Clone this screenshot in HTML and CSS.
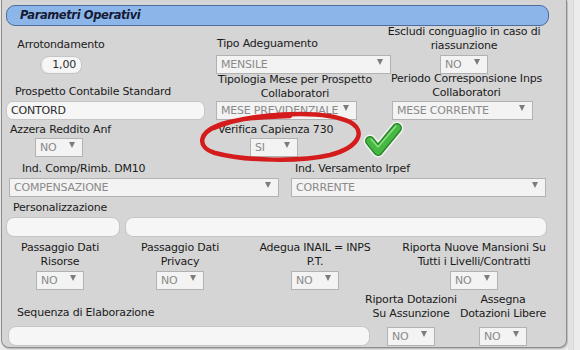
FILE: index.html
```html
<!DOCTYPE html>
<html lang="it">
<head>
<meta charset="utf-8">
<title>Parametri Operativi</title>
<link rel="stylesheet" href="styles.css">
</head>
<body>
<div class="page">
  <div class="panel">
    <div class="header">Parametri Operativi</div>

    <div class="row r1">
      <div class="cell c-center w102 ml8">
        <div class="lbl">Arrotondamento</div>
        <div class="inp num">1,00</div>
      </div>
      <div class="cell c-left w175 ml104">
        <div class="lbl pl1">Tipo Adeguamento</div>
        <div class="sel w175"><span>MENSILE</span><i class="arr"></i></div>
      </div>
      <div class="cell c-center w146">
        <div class="lbl lb2">Escludi conguaglio in caso di<br>riassunzione</div>
        <div class="sel w48"><span>NO</span><i class="arr"></i></div>
      </div>
    </div>

    <div class="row r2">
      <div class="cell c-left w199 ml4">
        <div class="lbl pl9">Prospetto Contabile Standard</div>
        <div class="inp txt w199">CONTORD</div>
      </div>
      <div class="cell c-center w158 ml11">
        <div class="lbl lb0">Tipologia Mese per Prospetto<br>Collaboratori</div>
        <div class="sel w141 self-start"><span>MESE PREVIDENZIALE</span><i class="arr"></i></div>
      </div>
      <div class="cell c-center w157 ml14">
        <div class="lbl lb1">Periodo Corresponsione Inps<br>Collaboratori</div>
        <div class="sel w141 self-start ml4"><span>MESE CORRENTE</span><i class="arr"></i></div>
      </div>
    </div>

    <div class="row r3">
      <div class="cell c-left w101 ml8">
        <div class="lbl lb1">Azzera Reddito Anf</div>
        <div class="sel w48 ml25"><span>NO</span><i class="arr"></i></div>
      </div>
      <div class="cell c-left w120 ml107">
        <div class="lbl lb1">Verifica Capienza 730</div>
        <div class="sel w48 ml32"><span>SI</span><i class="arr"></i></div>
      </div>
    </div>

    <div class="row r4">
      <div class="cell c-left w270 ml7">
        <div class="lbl pl13">Ind. Comp/Rimb. DM10</div>
        <div class="sel w270"><span>COMPENSAZIONE</span><i class="arr"></i></div>
      </div>
      <div class="cell c-left w255 ml12">
        <div class="lbl pl4">Ind. Versamento Irpef</div>
        <div class="sel w255"><span>CORRENTE</span><i class="arr"></i></div>
      </div>
    </div>

    <div class="row r5">
      <div class="cell c-left w114 ml4">
        <div class="lbl pl7">Personalizzazione</div>
        <div class="inp box w114"></div>
      </div>
      <div class="cell c-left w422 ml5">
        <div class="inp box w422"></div>
      </div>
    </div>

    <div class="row r6">
      <div class="cell c-center w100 ml8">
        <div class="lbl">Passaggio Dati<br>Risorse</div>
        <div class="sel w48"><span>NO</span><i class="arr"></i></div>
      </div>
      <div class="cell c-center w100 ml20">
        <div class="lbl">Passaggio Dati<br>Privacy</div>
        <div class="sel w48"><span>NO</span><i class="arr"></i></div>
      </div>
      <div class="cell c-center w120 ml25">
        <div class="lbl">Adegua INAIL = INPS<br>P.T.</div>
        <div class="sel w48"><span>NO</span><i class="arr"></i></div>
      </div>
      <div class="cell c-center w140 ml29">
        <div class="lbl">Riporta Nuove Mansioni Su<br>Tutti i Livelli/Contratti</div>
        <div class="sel w48"><span>NO</span><i class="arr"></i></div>
      </div>
    </div>

    <div class="row r7">
      <div class="cell c-left w362 ml6">
        <div class="lbl pl9 lb6">Sequenza di Elaborazione</div>
        <div class="inp box w362"></div>
      </div>
      <div class="cell c-center w82">
        <div class="lbl lb6">Riporta Dotazioni<br>Su Assunzione</div>
        <div class="sel w48"><span>NO</span><i class="arr"></i></div>
      </div>
      <div class="cell c-center w84 ml9">
        <div class="lbl lb6">Assegna<br>Dotazioni Libere</div>
        <div class="sel w48"><span>NO</span><i class="arr"></i></div>
      </div>
    </div>
  </div>
  <div class="strip"></div>

  <svg class="overlay" width="580" height="350" viewBox="0 0 580 350" aria-hidden="true">
    <path d="M214 128 C 245 114, 320 108, 350 122 C 366 131, 360 147, 330 155 C 300 162, 245 161, 215 153 C 196 147, 198 132, 222 124 C 240 118, 262 117, 290 116"
          fill="none" stroke="#d41c1c" stroke-width="4.5" stroke-linecap="round"/>
    <path d="M370 141 L378 151 L397 128" fill="none" stroke="#f2f2f2" stroke-width="13" stroke-linecap="round" stroke-linejoin="round"/>
    <path d="M370 141 L378 151 L397 128" fill="none" stroke="#2a862a" stroke-width="10" stroke-linecap="round" stroke-linejoin="round"/>
    <path d="M370 141 L378 151 L397 128" fill="none" stroke="#46b944" stroke-width="7" stroke-linecap="round" stroke-linejoin="round"/>
    <path d="M371 139 L378 147 L396 126" fill="none" stroke="#8fe07f" stroke-width="1.5" stroke-linecap="round" stroke-linejoin="round"/>
  </svg>
</div>
</body>
</html>
```
FILE: styles.css
```css
html, body {
  margin: 0;
  padding: 0;
}
body {
  background: #ececec;
  font-family: "DejaVu Sans", Verdana, sans-serif;
  font-size: 11px;
  letter-spacing: -0.2px;
  color: #1a1a1a;
}
.page {
  position: relative;
  width: 580px;
  height: 350px;
  display: flex;
  align-items: flex-start;
  overflow: hidden;
}
.panel {
  margin-left: 1px;
  width: 566px;
  height: 348px;
  box-sizing: border-box;
  background: #d5d5d5;
  border: 1px solid #8c8c8c;
  border-top: none;
  border-radius: 0 0 8px 8px;
  padding-top: 5px;
  overflow: hidden;
  box-shadow: 1px 1px 2px rgba(0,0,0,0.25);
}
.strip {
  margin-left: 1px;
  width: 5px;
  height: 350px;
  background: #e2e2e2;
  border-right: 1px solid #d9d9d9;
}
.header {
  margin-left: 4px;
  width: 543px;
  height: 21px;
  box-sizing: border-box;
  background: #8cb5ea;
  border: 1px solid #4e6c9c;
  border-radius: 9px;
  padding-left: 13px;
  font-weight: bold;
  font-style: italic;
  font-size: 11.5px;
  letter-spacing: -0.4px;
  line-height: 19px;
  color: #161a33;
}
.row {
  display: flex;
  align-items: flex-end;
}
.r1 { height: 48px; }
.r2 { height: 46px; }
.r3 { height: 37px; }
.r4 { height: 40px; }
.r5 { height: 40px; }
.r6 { height: 53px; }
.r7 { height: 56px; }

.cell {
  display: flex;
  flex-direction: column;
  flex: none;
}
.c-center { align-items: center; }
.c-left { align-items: flex-start; }
.self-start { align-self: flex-start; }

.lbl {
  line-height: 14px;
  white-space: nowrap;
  text-align: center;
  margin-bottom: 2px;
}
.c-left .lbl { text-align: left; }
.r1 .lbl { margin-bottom: 4px; }
.lb0 { margin-bottom: 0; }
.lb1 { margin-bottom: 1px; }
.lb2 { margin-bottom: 2px !important; }
.lb6 { margin-bottom: 6px; }

.pl1 { padding-left: 1px; }
.pl4 { padding-left: 4px; }
.pl7 { padding-left: 7px; }
.pl9 { padding-left: 9px; }
.pl13 { padding-left: 13px; }

.ml4 { margin-left: 4px; }
.ml5 { margin-left: 5px; }
.ml6 { margin-left: 6px; }
.ml7 { margin-left: 7px; }
.ml8 { margin-left: 8px; }
.ml9 { margin-left: 9px; }
.ml11 { margin-left: 11px; }
.ml12 { margin-left: 12px; }
.ml14 { margin-left: 14px; }
.ml20 { margin-left: 20px; }
.ml25 { margin-left: 25px; }
.ml29 { margin-left: 29px; }
.ml32 { margin-left: 32px; }
.ml104 { margin-left: 104px; }
.ml107 { margin-left: 107px; }

.w48 { width: 48px; }
.w82 { width: 82px; }
.w84 { width: 84px; }
.w100 { width: 100px; }
.w101 { width: 101px; }
.w102 { width: 102px; }
.w114 { width: 114px; }
.w120 { width: 120px; }
.w140 { width: 140px; }
.w141 { width: 141px; }
.w146 { width: 146px; }
.w157 { width: 157px; }
.w158 { width: 158px; }
.w175 { width: 175px; }
.w199 { width: 199px; }
.w255 { width: 255px; }
.w270 { width: 270px; }
.w362 { width: 362px; }
.w422 { width: 422px; }

.sel {
  height: 19px;
  box-sizing: border-box;
  border: 1px solid #b2b2b2;
  background: #f3f3f3;
  color: #8a8a8a;
  display: flex;
  align-items: center;
  justify-content: space-between;
  padding: 0 7px 0 4px;
  flex: none;
}
.sel span {
  overflow: hidden;
  white-space: nowrap;
  line-height: 17px;
}
.arr {
  flex: none;
  width: 0;
  height: 0;
  border-left: 3px solid transparent;
  border-right: 3px solid transparent;
  border-top: 6px solid #7c7c7c;
  margin-top: -5px;
  margin-left: 2px;
}

.inp {
  box-sizing: border-box;
  background: #f6f6f6;
  border: 1px solid #c6c6c6;
  border-radius: 8px;
  color: #2c2c2c;
  flex: none;
}
.num {
  width: 42px;
  height: 18px;
  line-height: 16px;
  text-align: right;
  padding-right: 5px;
  box-shadow: inset 1px 0 1px rgba(0,0,0,0.15);
}
.txt {
  height: 19px;
  line-height: 17px;
  padding-left: 4px;
  border-radius: 7px;
}
.box {
  height: 20px;
}

.overlay {
  position: absolute;
  left: 0;
  top: 0;
  pointer-events: none;
}
```
